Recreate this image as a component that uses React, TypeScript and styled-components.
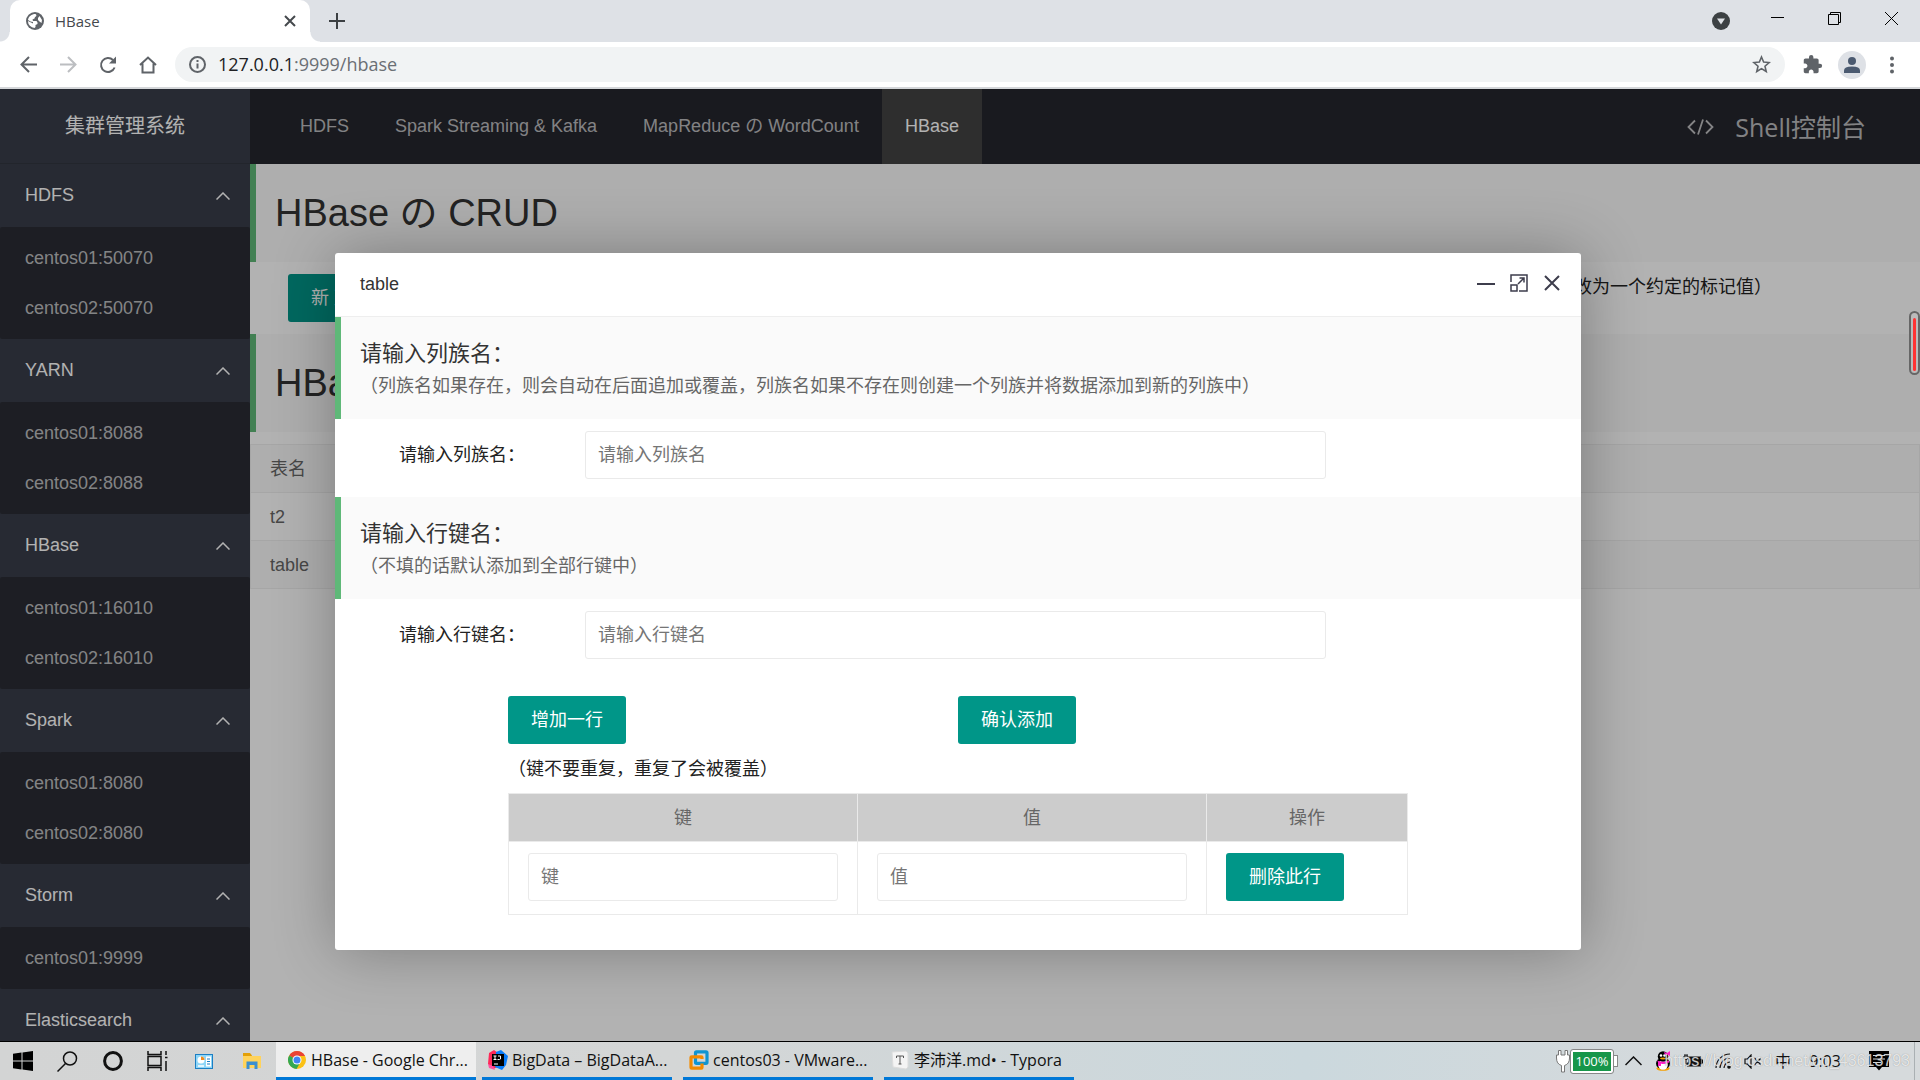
import React from "react";
import styled, { createGlobalStyle, css } from "styled-components";

const pageFont = `"Liberation Sans", "Noto Sans CJK SC", sans-serif`;
const systemFont = `"Open Sans", "Noto Sans CJK SC", sans-serif`;

const GlobalStyle = createGlobalStyle`
  * { box-sizing: border-box; }
  body { margin: 0; background: #fff; font-family: ${pageFont}; font-size: 18px; line-height: 24px; }
  button, input { font: inherit; }
  h1, h2, p, ul { margin: 0; padding: 0; font-weight: 400; }
  ul { list-style: none; }
  a { color: inherit; text-decoration: none; }
  svg { display: block; flex: none; }
`;

const Screen = styled.div`
  display: flex;
  flex-direction: column;
  height: 100vh;
  overflow: hidden;
`;

/* ---------- browser frame ---------- */

const TabStrip = styled.div`
  display: flex;
  flex: none;
  height: 42px;
  padding-left: 10px;
  background: #dee1e6;
  font-family: ${systemFont};
`;

const Tab = styled.div`
  position: relative;
  display: flex;
  align-items: center;
  gap: 11px;
  width: 300px;
  padding: 0 13px 0 16px;
  border-radius: 10px 10px 0 0;
  background: #fff;
  color: #45494d;
  font-size: 15px;
  &::before, &::after {
    content: "";
    position: absolute;
    bottom: 0;
    width: 10px;
    height: 10px;
  }
  &::before { left: -10px; background: radial-gradient(circle at 0 0, transparent 9px, #fff 10px); }
  &::after { right: -10px; background: radial-gradient(circle at 100% 0, transparent 9px, #fff 10px); }
`;

const TabTitle = styled.span`flex: 1;`;

const PlainButton = styled.button`
  display: flex;
  align-items: center;
  justify-content: center;
  padding: 0;
  border: 0;
  background: none;
  color: inherit;
`;

const NewTab = styled(PlainButton)`width: 54px; color: #3c4043;`;

const WindowButtons = styled.div`
  display: flex;
  align-items: flex-start;
  margin-left: auto;
`;

const WindowButton = styled(PlainButton)<{ $tall?: boolean }>`
  width: 57px;
  height: ${(p) => (p.$tall ? 42 : 36)}px;
`;

const Toolbar = styled.div`
  display: flex;
  align-items: center;
  flex: none;
  height: 47px;
  padding: 0 8px;
  border-bottom: 2px solid #d5d7da;
  background: #fff;
  font-family: ${systemFont};
`;

const ToolButton = styled(PlainButton)<{ $faded?: boolean }>`
  width: 40px;
  height: 36px;
  color: ${(p) => (p.$faded ? "#bcbec1" : "#5f6368")};
`;

const Avatar = styled.span`
  display: flex;
  align-items: center;
  justify-content: center;
  width: 28px;
  height: 28px;
  border-radius: 50%;
  background: #dee1e6;
  color: #4b5a70;
`;

const Omnibox = styled.div`
  display: flex;
  flex: 1;
  align-items: center;
  gap: 12px;
  height: 35px;
  margin: 0 7px;
  padding: 0 14px;
  border-radius: 18px;
  background: #f1f3f4;
  color: #5f6368;
`;

const Address = styled.span`
  flex: 1;
  padding-bottom: 2px;
  font-size: 18px;
  color: #6b6f74;
  b { font-weight: 400; color: #202124; }
`;

/* ---------- application ---------- */

const Page = styled.div`
  position: relative;
  display: flex;
  flex: 1;
  min-height: 0;
  overflow: hidden;
`;

const Sidebar = styled.aside`
  flex: none;
  width: 250px;
  overflow: hidden;
  background: #393d49;
  color: #fff;
`;

const Logo = styled.div`
  height: 75px;
  border-bottom: 1px solid #31353f;
  font-size: 20px;
  line-height: 75px;
  text-align: center;
`;

const GroupButton = styled(PlainButton)`
  justify-content: space-between;
  width: 100%;
  height: 63px;
  padding: 0 20px 0 25px;
  span { padding-bottom: 2px; }
`;

const GroupList = styled.ul`
  padding: 6px 0;
  border-radius: 2px;
  background: #2a2c34;
  li { height: 50px; padding-left: 25px; color: rgba(255, 255, 255, 0.7); line-height: 50px; }
`;

const Main = styled.div`
  flex: 1;
  min-width: 0;
  background: #fff;
`;

const Nav = styled.nav`
  display: flex;
  height: 75px;
  padding-left: 27px;
  background: #25262d;
`;

const NavLink = styled.a<{ $active?: boolean }>`
  padding: 0 23px;
  color: rgba(255, 255, 255, 0.7);
  line-height: 75px;
  ${(p) => p.$active && css`background: #434343; color: #fff;`}
`;

const ShellLink = styled.a`
  display: flex;
  align-items: center;
  gap: 21px;
  margin-left: auto;
  padding-right: 54px;
  color: rgba(255, 255, 255, 0.7);
  font-family: ${systemFont};
  font-size: 25px;
`;

const Quote = styled.div`
  padding: 19px;
  border-left: 6px solid #5fb878;
  background: #fafafa;
`;

const PageTitle = styled.h1`
  color: #333;
  font-size: 38px;
  line-height: 60px;
`;

const ActionRow = styled.div`
  display: flex;
  align-items: flex-start;
  justify-content: space-between;
  padding: 12px 148px 12px 38px;
  color: #222;
  p { line-height: 26px; }
`;

const GreenButton = styled.button`
  height: 48px;
  padding: 0 23px;
  border: 0;
  border-radius: 3px;
  background: #009688;
  color: #fff;
  white-space: nowrap;
`;

const TableList = styled.table`
  width: 100%;
  margin-top: 12px;
  border-collapse: collapse;
  color: #666;
  th, td { height: 48px; padding: 0 19px; border: 1px solid #eee; font-weight: 400; text-align: left; }
  thead tr, tbody tr:nth-child(even) { background: #fafafa; }
`;

const Shade = styled.div`
  position: absolute;
  inset: 0;
  background: rgba(0, 0, 0, 0.3);
`;

const ScrollMark = styled.span`
  position: absolute;
  top: 222px;
  right: 0;
  width: 11px;
  height: 64px;
  padding: 5px 2px 2px;
  border: 2px solid #666;
  border-radius: 6px;
  background: #bbb;
  &::after { content: ""; display: block; height: 100%; border-radius: 2px; background: #f33; }
`;

/* ---------- dialog ---------- */

const Dialog = styled.section`
  position: absolute;
  top: 164px;
  left: 335px;
  width: 65%;
  max-width: 1246px;
  padding-bottom: 35px;
  border-radius: 3px;
  background: #fff;
  box-shadow: 1px 1px 62px rgba(0, 0, 0, 0.3);
`;

const DialogHead = styled.header`
  display: flex;
  align-items: center;
  justify-content: space-between;
  height: 64px;
  padding: 0 18px 2px 25px;
  border-bottom: 1px solid #eee;
  color: #333;
`;

const DialogTools = styled.div`
  display: flex;
  gap: 11px;
  padding-bottom: 2px;
  color: #3d3d4c;
`;

const DialogTool = styled(PlainButton)`width: 22px; height: 24px;`;

const SectionTitle = styled.h2`
  color: #333;
  font-size: 22px;
  line-height: 36px;
`;

const SectionNote = styled.p`
  color: #666;
  line-height: 28px;
`;

const FieldRow = styled.div`
  display: flex;
  align-items: center;
  padding: 12px 255px 18px 64px;
  label { flex: none; width: 186px; color: #222; }
`;

const TextInput = styled.input`
  width: 100%;
  min-width: 0;
  height: 48px;
  padding: 0 12px;
  border: 1px solid #eaeaea;
  border-radius: 3px;
  background: #fff;
  color: #333;
  &::placeholder { color: #757575; opacity: 1; }
`;

const Editor = styled.div`padding: 19px 173px 0;`;

const EditorActions = styled.div`
  display: grid;
  grid-template-columns: 1fr 1fr;
  justify-items: start;
`;

const EditorNote = styled.p`
  padding: 13px 0 11px;
  color: #222;
  line-height: 25px;
`;

const PairTable = styled.table`
  width: 100%;
  border-collapse: collapse;
  table-layout: fixed;
  color: #666;
  th, td { border: 1px solid #eaeaea; font-weight: 400; }
  th { height: 48px; padding: 0; background: #ccc; }
  th:last-child { width: 201px; }
  td { height: 73px; padding: 0 19px 2px; }
  ${TextInput} { display: block; }
  ${GreenButton} { display: block; }
`;

/* ---------- taskbar ---------- */

const Taskbar = styled.footer`
  display: flex;
  flex: none;
  height: 39px;
  border-top: 1px solid #000;
  background: linear-gradient(90deg, #d3d4d4 0, #d4d6d6 35%, #cbd8dd 68%, #d6dadc 90%);
  color: #111;
  font-family: ${systemFont};
  font-size: 16px;
`;

const Launcher = styled(PlainButton)<{ $wide?: boolean }>`width: ${(p) => (p.$wide ? 48 : 45)}px;`;

const Task = styled(PlainButton)<{ $active?: boolean }>`
  justify-content: flex-start;
  gap: 4px;
  width: ${(p) => (p.$active ? 200 : 190)}px;
  margin-right: ${(p) => (p.$active ? 6 : 11)}px;
  padding-left: ${(p) => (p.$active ? 11 : 6)}px;
  border-bottom: 3px solid #0078d7;
  background: ${(p) => (p.$active ? "#eee" : "none")};
  white-space: nowrap;
`;

const Tray = styled.div`
  position: relative;
  display: flex;
  align-items: center;
  margin-left: auto;
  padding-right: 5px;
`;

const TraySlot = styled(PlainButton)<{ $wide?: boolean }>`width: ${(p) => (p.$wide ? 54 : 30)}px;`;

const DesktopEdge = styled.span`
  width: 1px;
  height: 100%;
  margin-left: 8px;
  background: #aab0b3;
`;

const Watermark = styled.span`
  position: absolute;
  right: 10px;
  color: rgba(255, 255, 255, 0.75);
  font-family: ${pageFont};
  font-size: 16px;
  text-shadow: 0 0 1px rgba(90, 90, 90, 0.6);
  pointer-events: none;
`;

/* ---------- icons ---------- */

type LineProps = { w: number; h?: number; box: string; stroke?: number; children: React.ReactNode };
const Line = ({ w, h = w, box, stroke = 2, children }: LineProps) => (
  <svg width={w} height={h} viewBox={box} fill="none" stroke="currentColor" strokeWidth={stroke} aria-hidden>
    {children}
  </svg>
);

const GlobeIcon = () => (
  <svg width="18" height="18" viewBox="0 0 18 18" aria-hidden>
    <circle cx="9" cy="9" r="9" fill="#5f6368" />
    <path
      d="M9.500 2C11 3 10.500 4.500 9 5L8.500 6.500L6.500 7.500L7 9H10.500L11.500 10.500V12L9.500 13V15L8.500 16A7.200 7.200 0 0 1 1.900 9L5 10.500L7 11.500V10L4.500 9.500L2 8C2.500 4.500 5.500 2 9.500 2Z"
      fill="#fff"
    />
    <path d="M13.500 4L16 8L15.500 11L13.500 9.500L12 8V6Z" fill="#fff" />
  </svg>
);

const WindowsIcon = () => (
  <svg width="20" height="20" viewBox="0 0 20 20" aria-hidden>
    <path d="M0 2.800L8.500 1.600V9.500H0ZM9.500 1.400L20 0V9.500H9.500ZM0 10.500H8.500V18.400L0 17.200ZM9.500 10.500H20V20L9.500 18.600Z" />
  </svg>
);

const ControlIcon = () => (
  <svg width="18" height="15" viewBox="0 0 18 15" aria-hidden>
    <rect x="0.500" y="0.500" width="17" height="14" fill="#8fd6f7" stroke="#1c7fc4" />
    <circle cx="6" cy="6" r="3.500" fill="#fff" />
    <path d="M6 6V2.500A3.500 3.500 0 0 1 9.500 6Z" fill="#f28a1c" />
    <path d="M3 12H9" stroke="#fff" strokeWidth="1.500" />
    <rect x="11" y="2.500" width="5" height="10" fill="#fff" />
    <path d="M12 5H15M12 7.500H15M12 10H15" stroke="#1c7fc4" />
  </svg>
);

const FolderIcon = () => (
  <svg width="18" height="16" viewBox="0 0 18 16" aria-hidden>
    <path d="M0 0H7L9 2.500V5H0Z" fill="#e3a008" />
    <path d="M0 3H18V15H0Z" fill="#ffd35c" />
    <path d="M3.500 16V8.500H14.500V16H11.500V12H6.500V16Z" fill="#3b8fd0" />
  </svg>
);

const ChromeIcon = () => (
  <svg width="20" height="20" viewBox="0 0 20 20" aria-hidden>
    <circle cx="10" cy="10" r="9" fill="#fbc116" />
    <path d="M10 10L2.200 5.500A9 9 0 0 1 17.800 5.500L18 6H10Z" fill="#ea4335" />
    <path d="M10 10L2.200 5.500A9 9 0 0 0 9.500 19L13.500 12Z" fill="#34a853" />
    <circle cx="10" cy="10" r="4.500" fill="#fff" />
    <circle cx="10" cy="10" r="3.500" fill="#4285f4" />
  </svg>
);

const IdeaIcon = () => (
  <svg width="20" height="20" viewBox="0 0 20 20" aria-hidden>
    <path d="M1 3L6 0L10 3V17L5 19L0 14Z" fill="#fe2857" />
    <path d="M8 2L13 0L20 6L18 15L14 20L7 17Z" fill="#087cfa" />
    <path d="M0 14L5 16L7 20L1 18Z" fill="#ff4fa0" />
    <rect x="4" y="4" width="12" height="12" />
    <path d="M5.500 6H8.500M7 6V9.500M5.500 9.500H8.500M10 6H12.500V9L11.500 9.500H9.500M6 14H10" stroke="#fff" fill="none" />
  </svg>
);

const VmwareIcon = () => (
  <svg width="20" height="20" viewBox="0 0 20 20" fill="none" strokeWidth="3.200" aria-hidden>
    <rect x="6.500" y="1.800" width="11.500" height="11.500" rx="1" stroke="#0f95d2" />
    <path d="M13 13.400V17.500Q13 18.200 12.300 18.200H2.700Q2 18.200 2 17.500V7.500Q2 6.800 2.700 6.800H12.300Q13 6.800 13 7.500V9" stroke="#f38b00" />
  </svg>
);

const TyporaIcon = () => (
  <svg width="20" height="20" viewBox="0 0 20 20" aria-hidden>
    <path d="M2 2L16 1L18 3V17L16 19L3 17Z" fill="#f4f4f4" stroke="#ddd" />
    <path d="M6.500 8V6H13.500V8M10 6V14M8.500 14H11.500" stroke="#555" fill="none" />
  </svg>
);

const BatteryFrame = styled.span`
  display: flex;
  align-items: center;
  gap: 1px;
`;

const BatteryLevel = styled.span`
  width: 42px;
  height: 23px;
  border: 2px solid #fff;
  border-radius: 2px;
  outline: 1px solid #888;
  background: #17964a;
  color: #fff;
  font-size: 13px;
  line-height: 19px;
  text-align: center;
`;

const BatteryTip = styled.span`
  width: 4px;
  height: 12px;
  border: 1px solid #888;
  border-left: 0;
  background: #fff;
`;

const PlugIcon = () => (
  <svg width="14" height="24" viewBox="0 0 14 24" fill="#fff" stroke="#777" aria-hidden>
    <path d="M2.500 6V1.500H5V6H9V1.500H11.500V6H13.500V9Q13.500 15 8.500 16.500V23H5.500V16.500Q0.500 15 0.500 9V6Z" />
  </svg>
);

const PenguinIcon = () => (
  <svg width="17" height="20" viewBox="0 0 17 20" aria-hidden>
    <ellipse cx="8" cy="17.500" rx="6.500" ry="2.300" fill="#f5a000" />
    <ellipse cx="8" cy="12.500" rx="7" ry="5.800" />
    <ellipse cx="8" cy="14" rx="4.800" ry="4.800" fill="#fff" />
    <circle cx="8" cy="5.500" r="5.200" />
    <circle cx="6" cy="4.500" r="1.300" fill="#fff" />
    <circle cx="9.500" cy="4.500" r="1.300" fill="#fff" />
    <ellipse cx="8" cy="7.500" rx="3" ry="1" fill="#f5a000" />
    <path d="M2 9.500Q8 12 14 9.500V11.500Q8 14 6 12.500V15H3V11Z" fill="#ff1fc8" />
    <path d="M9 1L12 2L15 0V5L12 3.500L10 4Z" fill="#ff1fc8" />
  </svg>
);

/* ---------- data ---------- */

const groups = [
  { name: "HDFS", hosts: ["centos01:50070", "centos02:50070"] },
  { name: "YARN", hosts: ["centos01:8088", "centos02:8088"] },
  { name: "HBase", hosts: ["centos01:16010", "centos02:16010"] },
  { name: "Spark", hosts: ["centos01:8080", "centos02:8080"] },
  { name: "Storm", hosts: ["centos01:9999"] },
  { name: "Elasticsearch", hosts: [] },
];

const links = ["HDFS", "Spark Streaming & Kafka", "MapReduce の WordCount", "HBase"];

const sections = [
  {
    id: "family",
    title: "请输入列族名",
    note: "（列族名如果存在，则会自动在后面追加或覆盖，列族名如果不存在则创建一个列族并将数据添加到新的列族中）",
  },
  { id: "rowkey", title: "请输入行键名", note: "（不填的话默认添加到全部行键中）" },
];

const tasks = [
  { label: "HBase - Google Chr...", icon: <ChromeIcon /> },
  { label: "BigData – BigDataA...", icon: <IdeaIcon /> },
  { label: "centos03 - VMware...", icon: <VmwareIcon /> },
  { label: "李沛洋.md• - Typora", icon: <TyporaIcon /> },
];

const BrowserFrame = () => (
  <>
    <TabStrip>
      <Tab>
        <GlobeIcon />
        <TabTitle>HBase</TabTitle>
        <PlainButton aria-label="Close tab">
          <Line w={14} box="0 0 14 14"><path d="M2 2L12 12M12 2L2 12" /></Line>
        </PlainButton>
      </Tab>
      <NewTab aria-label="New tab">
        <Line w={16} box="0 0 16 16"><path d="M8 0V16M0 8H16" /></Line>
      </NewTab>
      <WindowButtons>
        <WindowButton $tall aria-label="Search tabs">
          <svg width="18" height="18" viewBox="0 0 18 18" aria-hidden>
            <circle cx="9" cy="9" r="9" fill="#3c4043" />
            <path d="M5 6.500H13L9 12.500Z" fill="#dee1e6" />
          </svg>
        </WindowButton>
        <WindowButton aria-label="Minimize">
          <Line w={13} box="0 0 13 13" stroke={1}><path d="M0 5.500H13" /></Line>
        </WindowButton>
        <WindowButton aria-label="Restore">
          <Line w={13} box="0 0 13 13" stroke={1}><path d="M0.500 2.500H10.500V12.500H0.500ZM2.500 2.500V0.500H12.500V10.500H10.500" /></Line>
        </WindowButton>
        <WindowButton aria-label="Close">
          <Line w={13} box="0 0 13 13" stroke={1}><path d="M0 0L13 13M13 0L0 13" /></Line>
        </WindowButton>
      </WindowButtons>
    </TabStrip>
    <Toolbar>
      <ToolButton aria-label="Back"><Line w={17} box="0 0 17 17"><path d="M17 8.500H1.500M9 1L1.500 8.500L9 16" /></Line></ToolButton>
      <ToolButton $faded aria-label="Forward"><Line w={17} box="0 0 17 17"><path d="M0 8.500H15.500M8 1L15.500 8.500L8 16" /></Line></ToolButton>
      <ToolButton aria-label="Reload">
        <Line w={18} box="0 0 18 18">
          <path d="M15.600 11.500A7 7 0 1 1 14 4" />
          <path d="M17 0.500V7.500H10Z" fill="currentColor" stroke="none" />
        </Line>
      </ToolButton>
      <ToolButton aria-label="Home"><Line w={18} box="0 0 18 18"><path d="M1 9L9 1.500L17 9M3.500 7.500V16.500H14.500V7.500" /></Line></ToolButton>
      <Omnibox>
        <Line w={17} box="0 0 17 17"><circle cx="8.500" cy="8.500" r="7.500" /><path d="M8.500 7.500V12.500M8.500 4V6" /></Line>
        <Address><b>127.0.0.1</b>:9999/hbase</Address>
        <Line w={19} box="0 0 24 24"><path d="M12 2.500L14.700 8.900L21.600 9.500L16.400 14.100L18 20.900L12 17.300L6 20.900L7.600 14.100L2.400 9.500L9.300 8.900Z" /></Line>
      </Omnibox>
      <ToolButton aria-label="Extensions">
        <svg width="21" height="21" viewBox="0 0 24 24" fill="currentColor" aria-hidden>
          <path d="M20.500 11H19V7c0-1.100-.9-2-2-2h-4V3.500a2.500 2.500 0 0 0-5 0V5H4c-1.100 0-1.990.9-1.990 2v3.800H3.500c1.490 0 2.700 1.210 2.700 2.700s-1.210 2.700-2.700 2.700H2V20c0 1.100.9 2 2 2h3.800v-1.500c0-1.490 1.210-2.700 2.700-2.700s2.700 1.210 2.700 2.700V22H17c1.100 0 2-.9 2-2v-4h1.500a2.500 2.500 0 0 0 0-5z" />
        </svg>
      </ToolButton>
      <ToolButton aria-label="Profile">
        <Avatar>
          <svg width="16" height="16" viewBox="0 0 16 16" fill="currentColor" aria-hidden>
            <circle cx="8" cy="4" r="4" />
            <path d="M0 16V13.500Q0 9.500 8 9.500T16 13.500V16Z" />
          </svg>
        </Avatar>
      </ToolButton>
      <ToolButton aria-label="Menu">
        <svg width="4" height="18" viewBox="0 0 4 18" fill="currentColor" aria-hidden>
          <circle cx="2" cy="2.500" r="2" /><circle cx="2" cy="9" r="2" /><circle cx="2" cy="15.500" r="2" />
        </svg>
      </ToolButton>
    </Toolbar>
  </>
);

const PutDialog = () => (
  <Dialog role="dialog" aria-label="table">
    <DialogHead>
      table
      <DialogTools>
        <DialogTool aria-label="Minimize"><Line w={18} box="0 0 18 18"><path d="M0 10H18" /></Line></DialogTool>
        <DialogTool aria-label="Maximize">
          <Line w={18} box="0 0 18 18" stroke={1.500}>
            <path d="M1 8V1H17V17H9M1 11H7V17H1ZM8 10L14 4M9.500 4H14V8.500" />
          </Line>
        </DialogTool>
        <DialogTool aria-label="Close"><Line w={16} box="0 0 16 16"><path d="M1 1L15 15M15 1L1 15" /></Line></DialogTool>
      </DialogTools>
    </DialogHead>
    {sections.map((s) => (
      <React.Fragment key={s.id}>
        <Quote>
          <SectionTitle>{s.title}：</SectionTitle>
          <SectionNote>{s.note}</SectionNote>
        </Quote>
        <FieldRow>
          <label htmlFor={s.id}>{s.title}：</label>
          <TextInput id={s.id} placeholder={s.title} />
        </FieldRow>
      </React.Fragment>
    ))}
    <Editor>
      <EditorActions>
        <GreenButton>增加一行</GreenButton>
        <GreenButton>确认添加</GreenButton>
      </EditorActions>
      <EditorNote>（键不要重复，重复了会被覆盖）</EditorNote>
      <PairTable>
        <thead>
          <tr><th>键</th><th>值</th><th>操作</th></tr>
        </thead>
        <tbody>
          <tr>
            <td><TextInput aria-label="键" placeholder="键" /></td>
            <td><TextInput aria-label="值" placeholder="值" /></td>
            <td><GreenButton>删除此行</GreenButton></td>
          </tr>
        </tbody>
      </PairTable>
    </Editor>
  </Dialog>
);

const SystemBar = () => (
  <Taskbar>
    <Launcher aria-label="Start"><WindowsIcon /></Launcher>
    <Launcher aria-label="Search">
      <Line w={21} box="0 0 21 21" stroke={1.500}><circle cx="13" cy="7.500" r="6.500" /><path d="M8.500 12.500L0.500 20.500" /></Line>
    </Launcher>
    <Launcher aria-label="Cortana"><Line w={20} box="0 0 20 20" stroke={3}><circle cx="10" cy="10" r="8.400" /></Line></Launcher>
    <Launcher aria-label="Task view">
      <Line w={21} h={20} box="0 0 21 20" stroke={1.500}>
        <path d="M1 0V3.500H14V0M1 5.500H14V14.500H1ZM1 20V16.500H14V20M19 0V4M19 10V20M18 6.500H20.500" />
      </Line>
    </Launcher>
    <Launcher $wide aria-label="Control panel"><ControlIcon /></Launcher>
    <Launcher $wide aria-label="Files"><FolderIcon /></Launcher>
    {tasks.map((t, i) => (
      <Task key={t.label} $active={i === 0}>
        {t.icon}
        {t.label}
      </Task>
    ))}
    <Tray>
      <BatteryFrame>
        <PlugIcon />
        <BatteryLevel>100%</BatteryLevel>
        <BatteryTip />
      </BatteryFrame>
      <TraySlot aria-label="Hidden icons"><Line w={17} h={10} box="0 0 17 10" stroke={1.500}><path d="M0.500 9L8.500 1L16.500 9" /></Line></TraySlot>
      <TraySlot aria-label="QQ"><PenguinIcon /></TraySlot>
      <TraySlot aria-label="Power">
        <Line w={20} h={14} box="0 0 20 14" stroke={1}>
          <path d="M1 2H5V4.500Q3 7 1 4.500ZM2 0V2M4 0V2M3 6V12" />
          <path d="M6 3H18V12H4V9H6Z" fill="currentColor" /><path d="M19.500 5.500V9.500" />
        </Line>
      </TraySlot>
      <TraySlot aria-label="Network">
        <Line w={16} box="0 0 16 16" stroke={1.200}>
          <path d="M1 15A14 14 0 0 1 15 1M5 15A10 10 0 0 1 15 5M9 15A6 6 0 0 1 15 9" />
          <circle cx="14" cy="14" r="1.200" fill="currentColor" />
        </Line>
      </TraySlot>
      <TraySlot aria-label="Volume">
        <Line w={18} h={15} box="0 0 18 15" stroke={1.200}><path d="M1 5H3.500L7 1V14L3.500 10H1ZM10.500 4L17 11M17 4L10.500 11" /></Line>
      </TraySlot>
      <TraySlot>中</TraySlot>
      <TraySlot as="span" $wide>9:03</TraySlot>
      <TraySlot $wide aria-label="Notifications">
        <svg width="20" height="20" viewBox="0 0 20 20" aria-hidden>
          <path d="M0 0H20V16H13L10 19.500L7 16H0Z" />
          <path d="M4 4.500H16M4 8H16M4 11.500H12" stroke="#d6dadc" />
        </svg>
      </TraySlot>
      <DesktopEdge />
      <Watermark>https://blog.csdn.net/qq_43613793</Watermark>
    </Tray>
  </Taskbar>
);

export default function App() {
  return (
    <Screen>
      <GlobalStyle />
      <BrowserFrame />
      <Page>
        <Sidebar>
          <Logo>集群管理系统</Logo>
          {groups.map((g) => (
            <React.Fragment key={g.name}>
              <GroupButton>
                <span>{g.name}</span>
                <Line w={14} h={8} box="0 0 14 8" stroke={1.500}><path d="M0.500 7.500L7 1L13.500 7.500" /></Line>
              </GroupButton>
              {g.hosts.length > 0 && (
                <GroupList>
                  {g.hosts.map((h) => <li key={h}><a href="#host">{h}</a></li>)}
                </GroupList>
              )}
            </React.Fragment>
          ))}
        </Sidebar>
        <Main>
          <Nav>
            {links.map((l, i) => (
              <NavLink key={l} href="#nav" $active={i === 3}>{l}</NavLink>
            ))}
            <ShellLink href="#shell">
              <Line w={27} h={16} box="0 0 27 16" stroke={1.800}><path d="M8 1.500L1.500 8L8 14.500M19 1.500L25.500 8L19 14.500M16 0.500L11 15.500" /></Line>
              Shell控制台
            </ShellLink>
          </Nav>
          <Quote><PageTitle>HBase の CRUD</PageTitle></Quote>
          <ActionRow>
            <GreenButton>新 建</GreenButton>
            <p>改为一个约定的标记值）</p>
          </ActionRow>
          <Quote><PageTitle>HBase</PageTitle></Quote>
          <TableList>
            <thead><tr><th>表名</th></tr></thead>
            <tbody>
              <tr><td>t2</td></tr>
              <tr><td>table</td></tr>
            </tbody>
          </TableList>
        </Main>
        <Shade>
          <PutDialog />
        </Shade>
        <ScrollMark />
      </Page>
      <SystemBar />
    </Screen>
  );
}
